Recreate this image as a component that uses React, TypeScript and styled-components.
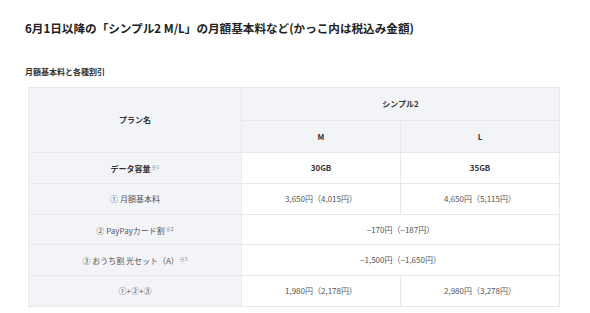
import React from "react";
import styled, { createGlobalStyle } from "styled-components";

const Global = createGlobalStyle`
  html, body { margin: 0; padding: 0; background: #fff; }
  body { font-family: "Noto Sans CJK JP", "Noto Sans", sans-serif; }
`;

const Page = styled.div`
  width: 590px;
  height: 313px;
  box-sizing: border-box;
  padding: 19px 0 0 25px;
  display: flex;
  flex-direction: column;
  overflow: hidden;
`;

const Title = styled.h2`
  margin: 0;
  font-size: 11.6px;
  line-height: 18px;
  font-weight: 600;
  color: #222;
`;

const Subtitle = styled.h3`
  margin: 29px 0 0;
  font-size: 8px;
  line-height: 12px;
  font-weight: 700;
  color: #333;
`;

const Table = styled.table`
  margin: 9px 0 0 3px;
  width: 531px;
  border-collapse: collapse;
  table-layout: fixed;
  font-size: 8px;
  color: #555;
  border-top: 1px solid #e3e4e8;
`;

const Cell = styled.td<{ $head?: boolean; $bold?: boolean; $h?: number }>`
  border: 1px solid #e8e9ed;
  background: ${(p) => (p.$head ? "#f3f4f8" : "#fff")};
  font-weight: ${(p) => (p.$bold ? 700 : 400)};
  color: ${(p) => (p.$bold ? "#333" : "#555")};
  text-align: center;
  vertical-align: middle;
  padding: 0;
  height: ${(p) => p.$h ?? 30}px;
  line-height: 12px;
`;

const Sup = styled.sup`
  font-size: 5px;
  vertical-align: 3px;
  margin-left: 1px;
  font-weight: 400;
  color: #777;
`;

const rows: { label: React.ReactNode; m: string; l?: string }[] = [
  { label: "① 月額基本料", m: "3,650円（4,015円）", l: "4,650円（5,115円）" },
  {
    label: (
      <>
        ② PayPayカード割<Sup>※2</Sup>
      </>
    ),
    m: "−170円（−187円）",
  },
  {
    label: (
      <>
        ③ おうち割 光セット（A）<Sup>※3</Sup>
      </>
    ),
    m: "−1,500円（−1,650円）",
  },
  { label: "①+②+③", m: "1,980円（2,178円）", l: "2,980円（3,278円）" },
];

export default function App() {
  return (
    <>
      <Global />
      <Page>
        <Title>6月1日以降の「シンプル2 M/L」の月額基本料など(かっこ内は税込み金額)</Title>
        <Subtitle>月額基本料と各種割引</Subtitle>
        <Table>
          <colgroup>
            <col style={{ width: 213 }} />
            <col style={{ width: 159 }} />
            <col style={{ width: 159 }} />
          </colgroup>
          <tbody>
            <tr>
              <Cell as="th" rowSpan={2} $head $bold $h={32}>
                プラン名
              </Cell>
              <Cell as="th" colSpan={2} $head $bold $h={32}>
                シンプル2
              </Cell>
            </tr>
            <tr>
              <Cell as="th" $head $bold $h={31}>M</Cell>
              <Cell as="th" $head $bold $h={31}>L</Cell>
            </tr>
            <tr>
              <Cell as="th" $head $bold $h={30}>
                データ容量<Sup>※1</Sup>
              </Cell>
              <Cell $bold $h={30}>30GB</Cell>
              <Cell $bold $h={30}>35GB</Cell>
            </tr>
            {rows.map((r, i) => (
              <tr key={i}>
                <Cell $head $h={29.7}>{r.label}</Cell>
                {r.l ? (
                  <>
                    <Cell $h={29.7}>{r.m}</Cell>
                    <Cell $h={29.7}>{r.l}</Cell>
                  </>
                ) : (
                  <Cell colSpan={2} $h={29.7}>{r.m}</Cell>
                )}
              </tr>
            ))}
          </tbody>
        </Table>
      </Page>
    </>
  );
}
